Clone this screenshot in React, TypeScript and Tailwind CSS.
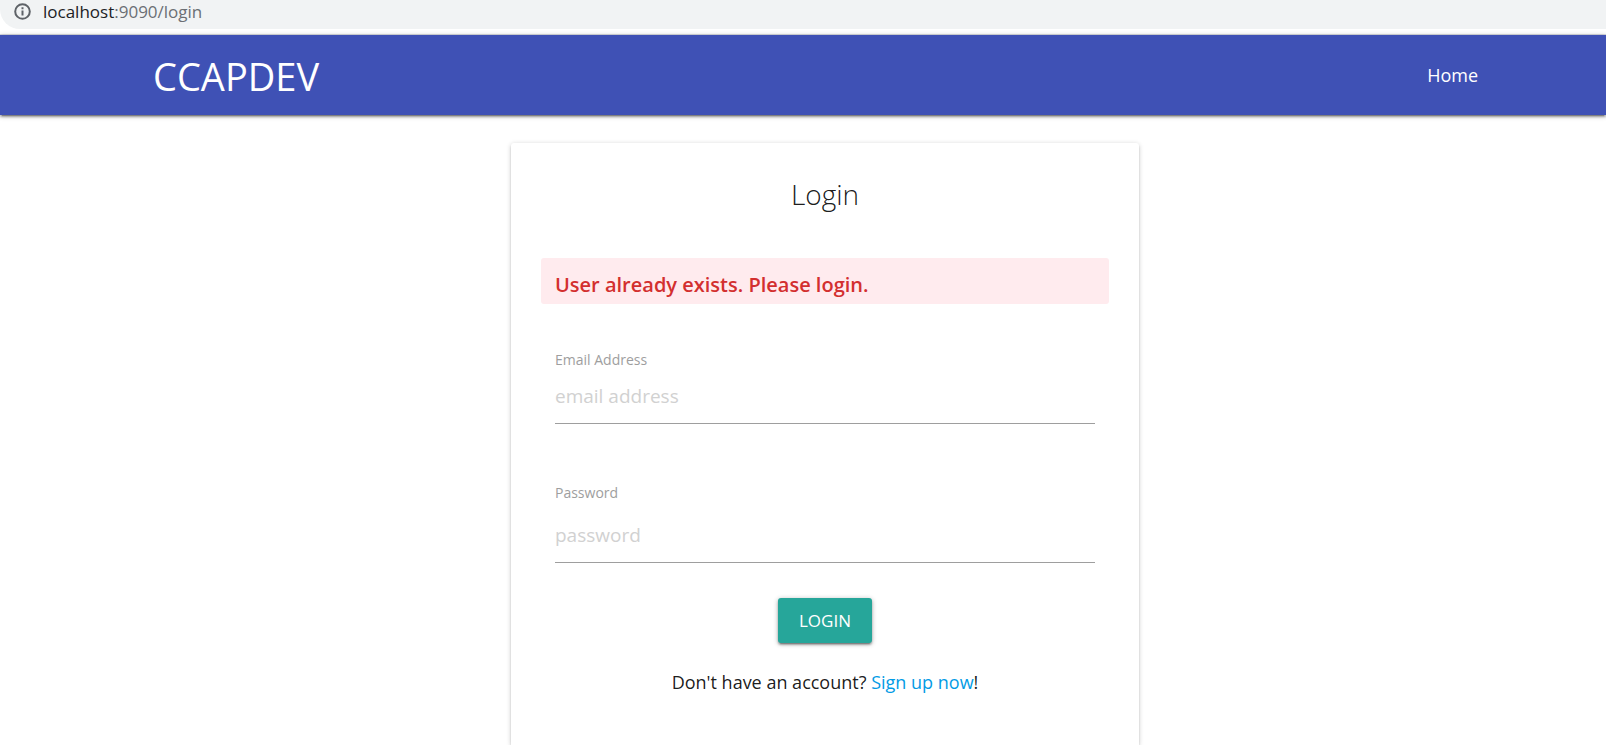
import { useState } from "react";
import type { InputHTMLAttributes } from "react";

function AddressBar() {
  return (
    <div className="border-b border-[#dadce0] bg-white pb-[5px]">
      <div className="flex h-[29px] items-start gap-3 rounded-bl-[20px] bg-[#f1f3f4] pl-[14px]">
        <svg
          className="mt-[3px] size-[17px] shrink-0"
          viewBox="0 0 17 17"
          fill="none"
          stroke="#5f6368"
          strokeWidth="2"
          aria-hidden="true"
        >
          <circle cx="8.5" cy="8.5" r="7.3" strokeWidth="2" />
          <path d="M8.5 7.5v5M8.5 4.2v2" />
        </svg>
        <p className="text-[17px] leading-6 text-[#6b6f74]">
          <span className="text-[#202124]">localhost</span>:9090/login
        </p>
      </div>
    </div>
  );
}

function NavBar() {
  return (
    <nav className="relative flex h-20 items-center justify-between bg-[#3f51b5] pr-32 pl-[153px] text-white shadow-[0_2px_2px_0_rgba(0,0,0,0.24),0_3px_1px_-2px_rgba(0,0,0,0.22),0_1px_5px_0_rgba(0,0,0,0.3)]">
      <a href="#top" className="pt-0.5 text-[38px] leading-[80px]">
        CCAPDEV
      </a>
      <a href="#home" className="text-lg leading-[80px]">
        Home
      </a>
    </nav>
  );
}

type FieldProps = InputHTMLAttributes<HTMLInputElement> & { id: string; label: string };

function Field({ id, label, className, ...rest }: FieldProps) {
  return (
    <div className="flex flex-col px-[14px]">
      <label htmlFor={id} className="text-sm leading-5 text-[#9e9e9e]">
        {label}
      </label>
      <input
        id={id}
        {...rest}
        className={`h-[54px] w-full border-b border-[#9e9e9e] bg-transparent pb-0.5 text-[19px] text-black/90 outline-none placeholder:text-[#d1d1d1] focus:border-[#26a69a] ${className ?? ""}`}
      />
    </div>
  );
}

export default function App() {
  const [email, setEmail] = useState("");
  const [password, setPassword] = useState("");

  return (
    <div className="flex min-h-screen flex-col overflow-hidden bg-white font-['Open_Sans','Noto_Sans',sans-serif] text-black/90">
      <AddressBar />
      <NavBar />
      <main className="flex flex-1 justify-center pt-7 pl-11">
        <section className="flex w-full max-w-[628px] flex-1 flex-col rounded-t-[3px] bg-white px-[30px] pt-[31px] shadow-[0_2px_2px_0_rgba(0,0,0,0.14),0_3px_1px_-2px_rgba(0,0,0,0.12),0_1px_5px_0_rgba(0,0,0,0.2)]">
          <h1 className="text-center text-[28px] leading-10 font-light">Login</h1>
          <p
            role="alert"
            className="mt-11 rounded-[3px] bg-[#ffebee] px-[14px] pt-[10px] pb-[2px] text-xl leading-[34px] font-semibold text-[#d32f2f]"
          >
            User already exists. Please login.
          </p>
          <form className="flex flex-col" onSubmit={(event) => event.preventDefault()}>
            <div className="mt-[46px]">
              <Field
                id="email"
                label="Email Address"
                type="email"
                placeholder="email address"
                value={email}
                onChange={(event) => setEmail(event.target.value)}
              />
            </div>
            <div className="mt-[59px]">
              <Field
                id="password"
                label="Password"
                type="password"
                placeholder="password"
                className="mt-[6px]"
                value={password}
                onChange={(event) => setPassword(event.target.value)}
              />
            </div>
            <button
              type="submit"
              className="mt-[35px] h-[45px] w-[94px] self-center rounded-[3px] bg-[#26a69a] text-[17px] text-white uppercase shadow-[0_2px_2px_0_rgba(0,0,0,0.24),0_3px_1px_-2px_rgba(0,0,0,0.22),0_1px_5px_0_rgba(0,0,0,0.3)]"
            >
              Login
            </button>
          </form>
          <p className="mt-6 text-center text-lg leading-[30px]">
            Don't have an account?{" "}
            <a href="#signup" className="text-[#039be5]">
              Sign up now
            </a>
            !
          </p>
        </section>
      </main>
    </div>
  );
}
